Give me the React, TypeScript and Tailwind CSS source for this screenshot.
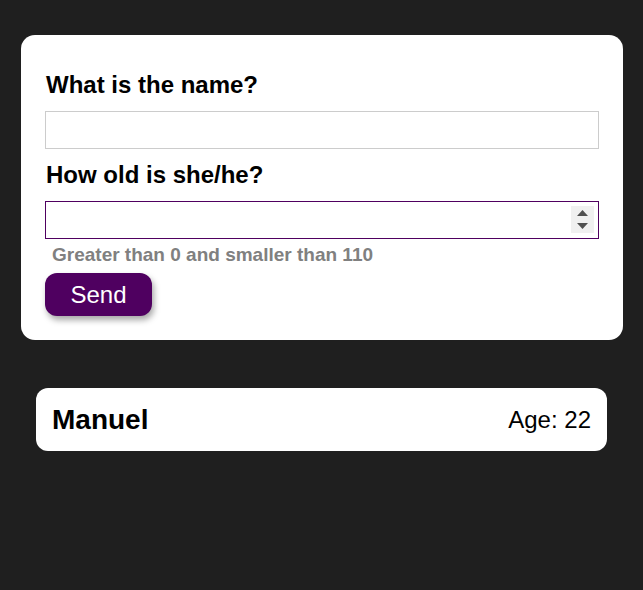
import { useState } from "react";

type Person = { name: string; age: number };

export default function App() {
  const [name, setName] = useState("");
  const [age, setAge] = useState("");
  const [people, setPeople] = useState<Person[]>([{ name: "Manuel", age: 22 }]);

  const handleSubmit = (e: React.FormEvent) => {
    e.preventDefault();
    const n = Number(age);
    if (!name.trim() || n <= 0 || n >= 110) return;
    setPeople([...people, { name: name.trim(), age: n }]);
    setName("");
    setAge("");
  };

  // custom spinner, the native one is hidden
  const step = (d: number) => setAge(String((Number(age) || 0) + d));

  return (
    <div className="min-h-screen bg-[#1f1f1f] pt-[35px] font-['Liberation_Sans',Arial,sans-serif]">
      <form
        onSubmit={handleSubmit}
        className="mx-[21px] w-[602px] rounded-[14px] bg-white px-6 pt-9 pb-6"
      >
        <label className="block pl-px text-[24px] leading-7 font-bold text-black">
          What is the name?
        </label>
        <input
          type="text"
          value={name}
          onChange={(e) => setName(e.target.value)}
          className="mt-3 block h-[38px] w-full border border-[#cccccc] px-1 text-lg outline-none"
        />
        <label className="mt-3 block pl-px text-[24px] leading-7 font-bold text-black">
          How old is she/he?
        </label>
        <div className="relative mt-3">
          <input
            type="number"
            autoFocus
            value={age}
            onChange={(e) => setAge(e.target.value)}
            className="block h-[38px] w-full border border-[#4f0060] px-[5px] text-lg caret-black outline-none [appearance:textfield] [&::-webkit-inner-spin-button]:appearance-none [&::-webkit-outer-spin-button]:appearance-none"
          />
          <div className="absolute top-[5px] right-[5px] flex h-[27px] w-[23px] flex-col items-center justify-center gap-[7px] bg-[#f0f0f0]">
            <button type="button" onClick={() => step(1)} className="block">
              <svg width="11" height="6" viewBox="0 0 11 6">
                <path d="M5.5 0L11 6H0z" fill="#505050" />
              </svg>
            </button>
            <button type="button" onClick={() => step(-1)} className="block">
              <svg width="11" height="6" viewBox="0 0 11 6">
                <path d="M0 0h11L5.5 6z" fill="#505050" />
              </svg>
            </button>
          </div>
        </div>
        <p className="mt-1 pl-[7px] text-[19px] leading-6 font-bold text-[#808080]">
          Greater than 0 and smaller than 110
        </p>
        <button
          type="submit"
          className="mt-1.5 h-[43px] w-[107px] rounded-xl bg-[#4f0060] text-[24px] text-white shadow-[2px_4px_6px_rgba(0,0,0,0.35)]"
        >
          Send
        </button>
      </form>

      <div className="mx-[36px] mt-12 flex flex-col gap-4">
        {people.map((p) => (
          <div
            key={p.name + p.age}
            className="flex h-[63px] items-center justify-between rounded-xl bg-white px-4"
          >
            <span className="text-[28px] font-bold text-black">{p.name}</span>
            <span className="text-[24px] text-black">Age: {p.age}</span>
          </div>
        ))}
      </div>
    </div>
  );
}
